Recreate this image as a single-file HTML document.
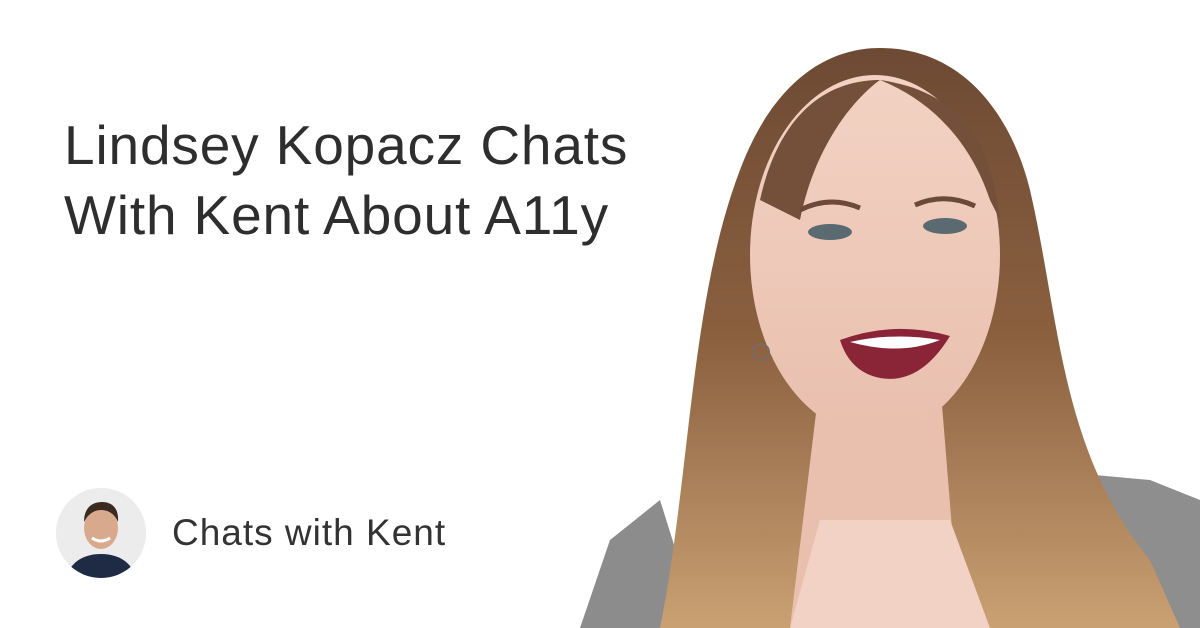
<!DOCTYPE html>
<html><head><meta charset="utf-8"><style>
html,body{margin:0;padding:0;background:#fff;}
.wrap{position:relative;width:1200px;height:628px;overflow:hidden;background:#fff;font-family:"Liberation Sans",sans-serif;}
h1{position:absolute;left:64px;top:110px;margin:0;font-weight:400;font-size:55px;line-height:70px;color:#2e2e2e;letter-spacing:0.85px;}
.brand{position:absolute;left:172px;top:512px;font-size:37px;color:#333;letter-spacing:1px;}
.av{position:absolute;left:56px;top:488px;width:90px;height:90px;border-radius:50%;overflow:hidden;background:#eee;}
svg.photo{position:absolute;left:0;top:0;}
</style></head><body><div class="wrap">
<svg class="photo" width="1200" height="628" viewBox="0 0 1200 628">
<defs>
<linearGradient id="hair" x1="0" y1="0" x2="0" y2="1">
<stop offset="0" stop-color="#6e4a34"/><stop offset="0.5" stop-color="#8a603f"/><stop offset="1" stop-color="#c9a173"/></linearGradient>
<linearGradient id="skin" x1="0" y1="0" x2="0" y2="1">
<stop offset="0" stop-color="#f3d2c3"/><stop offset="1" stop-color="#e9bfae"/></linearGradient>
</defs>
<path d="M580 628 L610 540 L660 500 L700 628 Z" fill="#8c8c8c"/>
<path d="M1040 470 L1150 480 L1200 500 L1200 628 L1060 628 Z" fill="#8e8e8e"/>
<path d="M660 628 C690 480 690 300 740 170 C770 90 820 48 880 48 C960 48 1010 110 1030 190 C1060 320 1060 450 1150 560 L1180 628 Z" fill="url(#hair)"/>
<path d="M820 380 L940 380 L960 628 L790 628 Z" fill="#e8c0ad"/>
<path d="M790 628 L820 520 L950 520 L990 628 Z" fill="#f1d2c4"/>
<ellipse cx="875" cy="255" rx="125" ry="180" fill="url(#skin)"/>
<path d="M760 200 C780 110 830 80 880 80 C880 80 820 120 800 220 Z" fill="#74503a"/>
<path d="M880 80 C950 90 990 130 1000 220 L990 200 C970 140 930 100 880 80Z" fill="#74503a"/>
<ellipse cx="830" cy="232" rx="22" ry="8" fill="#5a6a70"/>
<ellipse cx="945" cy="226" rx="22" ry="8" fill="#5a6a70"/>
<path d="M800 210 Q830 195 860 208" stroke="#6a4a38" stroke-width="5" fill="none"/>
<path d="M915 205 Q945 192 975 206" stroke="#6a4a38" stroke-width="5" fill="none"/>
<path d="M840 340 Q895 320 950 336 Q920 385 880 378 Q850 372 840 340Z" fill="#8a2538"/>
<path d="M850 342 Q895 332 940 340 Q900 356 850 342Z" fill="#fff"/>
<circle cx="761" cy="352" r="8" fill="none" stroke="#7a6a60" stroke-width="2"/>
</svg>
<h1>Lindsey Kopacz Chats<br>With Kent About A11y</h1>
<div class="av"><svg width="90" height="90" viewBox="0 0 90 90">
<rect width="90" height="90" fill="#ececec"/>
<path d="M10 90 C15 72 30 66 45 66 C60 66 75 72 80 90Z" fill="#1f2a44"/>
<ellipse cx="45" cy="40" rx="17" ry="21" fill="#d9a98e"/>
<path d="M28 34 C28 18 38 14 46 14 C56 14 63 20 62 34 C58 24 50 22 45 22 C38 22 32 26 28 34Z" fill="#3a2a20"/>
<path d="M36 50 Q45 56 54 50" stroke="#fff" stroke-width="3" fill="none"/>
</svg></div>
<div class="brand">Chats with Kent</div>
</div></body></html>
